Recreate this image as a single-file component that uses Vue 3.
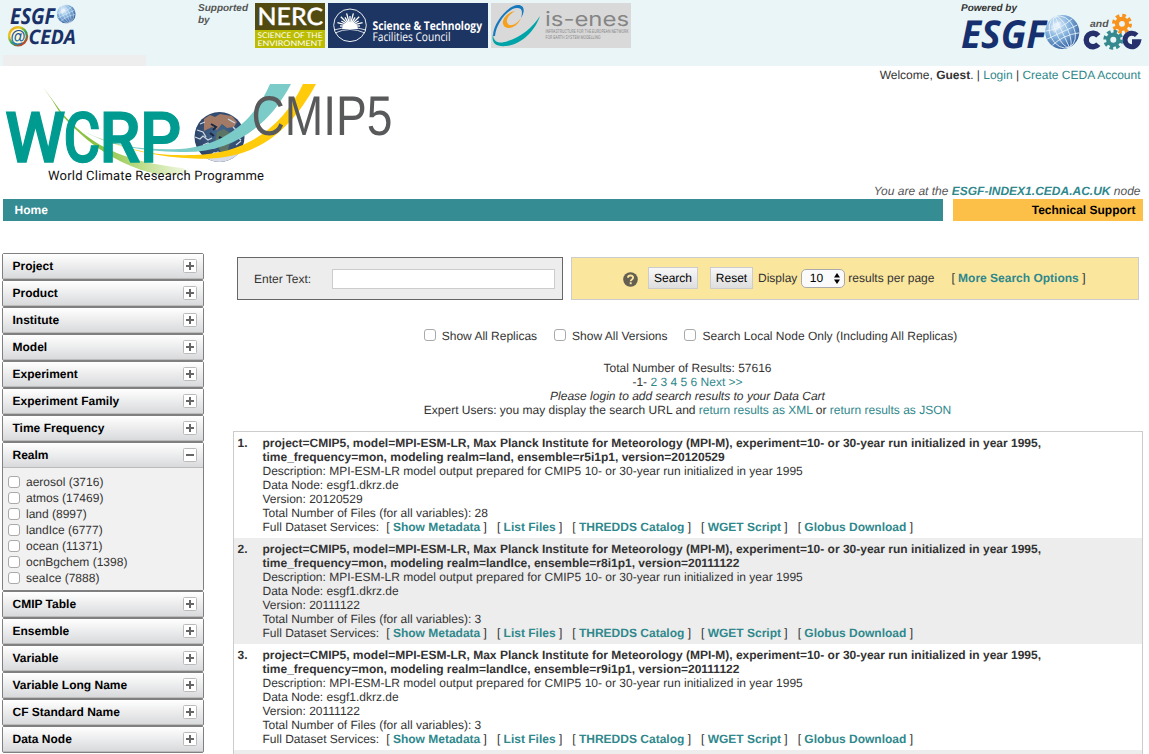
<script setup>
const before = ['Project', 'Product', 'Institute', 'Model', 'Experiment', 'Experiment Family', 'Time Frequency', 'Realm']
const after = ['CMIP Table', 'Ensemble', 'Variable', 'Variable Long Name', 'CF Standard Name', 'Data Node']
const realms = ['aerosol (3716)', 'atmos (17469)', 'land (8997)', 'landIce (6777)', 'ocean (11371)', 'ocnBgchem (1398)', 'seaIce (7888)']
const facets = [...before, ...after].map((name) => ({ name, open: name === 'Realm' }))
const services = ['Show Metadata', 'List Files', 'THREDDS Catalog', 'WGET Script', 'Globus Download']
const results = [
  { realm: 'land', ens: 'r5i1p1', version: '20120529', files: 28 },
  { realm: 'landIce', ens: 'r8i1p1', version: '20111122', files: 3 },
  { realm: 'landIce', ens: 'r9i1p1', version: '20111122', files: 3 },
]
const rays = Array.from({ length: 13 }, (_, i) => i * 15 - 90)
</script>

<template>
  <div class="page">
    <header class="top">
      <div class="left">
        <svg class="ceda" width="90" height="50" viewBox="0 0 90 50">
          <defs>
            <radialGradient id="globe" cx=".35" cy=".3" r=".8">
              <stop offset="0" stop-color="#e4f2fc" /><stop offset=".45" stop-color="#83b1dc" /><stop offset="1" stop-color="#285395" />
            </radialGradient>
            <linearGradient id="rainbow" x1="0" y1="0" x2=".8" y2="1">
              <stop offset="0" stop-color="#e8a01c" /><stop offset=".3" stop-color="#e8c61c" /><stop offset=".6" stop-color="#28a55b" /><stop offset="1" stop-color="#d43b26" />
            </linearGradient>
            <linearGradient id="blues" x1="0" y1="0" x2="0" y2="1">
              <stop offset="0" stop-color="#17358a" /><stop offset="1" stop-color="#1c7fc0" />
            </linearGradient>
            <symbol id="world" viewBox="0 0 36 36">
              <circle cx="18" cy="18" r="17.3" fill="url(#globe)" />
              <g fill="none" stroke="#e8f4fc" stroke-width=".8" transform="rotate(-25 18 18)">
                <ellipse cx="18" cy="18" rx="6" ry="17" /><ellipse cx="18" cy="18" rx="12.5" ry="17" />
                <path d="M18 1v34M1 18h34M3 10q15 5 30 0M3 26q15 -5 30 0" />
              </g>
              <path d="M6 13q5-6 11-5l-2 6-5 5z" fill="#fff" opacity=".35" />
            </symbol>
          </defs>
          <text class="os" x="10" y="24" font-size="22" textLength="45" lengthAdjust="spacingAndGlyphs" fill="#1a3167">ESGF</text>
          <use href="#world" x="56.500" y="4" width="19.500" height="20" />
          <circle cx="18" cy="36.300" r="9" fill="#fdf8d0" stroke="url(#rainbow)" stroke-width="2.400" />
          <text x="10.500" y="41.500" font-size="17" font-weight="bold" font-family="Liberation Sans, sans-serif" textLength="15" lengthAdjust="spacingAndGlyphs" fill="url(#blues)">@</text>
          <text class="os" x="28.500" y="43.500" font-size="20" textLength="47.500" lengthAdjust="spacingAndGlyphs" fill="#1a3167">CEDA</text>
        </svg>
        <div class="stub"></div>
      </div>
      <div class="supported">Supported by</div>
      <div class="logos">
        <svg width="70" height="45" viewBox="0 0 70 45">
          <path fill="#514a11" d="M0 0h70v27H0z" /><path fill="#bcbd00" d="M0 27h70v18H0z" />
          <g fill="#fff" font-family="Lato, sans-serif">
            <text x="2.500" y="22" font-size="24" font-weight="500" stroke="#fff" stroke-width=".35" textLength="65.500" lengthAdjust="spacingAndGlyphs">NERC</text>
            <text x="2.500" y="34.800" font-size="7.800" textLength="65" lengthAdjust="spacingAndGlyphs">SCIENCE OF THE</text>
            <text x="2.500" y="42.800" font-size="7.800" textLength="65" lengthAdjust="spacingAndGlyphs">ENVIRONMENT</text>
          </g>
        </svg>
        <svg width="160" height="45" viewBox="0 0 160 45">
          <path fill="#1d3562" d="M0 0h160v45H0z" />
          <circle cx="22" cy="22.300" r="16.300" fill="none" stroke="#fff" stroke-width=".9" />
          <g stroke="#fff" stroke-width="1.300">
            <path v-for="(a, i) in rays" :key="a" :d="i % 2 ? 'M22 20V10' : 'M22 20V13'" :transform="`rotate(${a} 22 23)`" />
          </g>
          <path d="M14 26a8 7 0 0 1 16 0z" fill="#fff" /><path d="M6 27q16-5 32 0M7 30q15-7 30 0" fill="none" stroke="#fff" stroke-width=".8" />
          <g fill="#fff" font-family="Open Sans, sans-serif">
            <text x="44.500" y="26.500" font-size="12" font-weight="bold" textLength="109.500" lengthAdjust="spacingAndGlyphs">Science &amp; Technology</text>
            <text x="44.500" y="38.300" font-size="12" textLength="78" lengthAdjust="spacingAndGlyphs">Facilities Council</text>
          </g>
        </svg>
        <svg width="140" height="45" viewBox="0 0 140 45">
          <path fill="#d9d9d9" d="M0 0h140v45H0z" />
          <path d="M2 33C2 20 17 2 27 2c7 0 7 7 3 13 2-7 1-10-4-10C17 5 5 21 4 33z" fill="#1679bd" />
          <path d="M30 15c-3 8-12 13-17 8-4-5 3-14 11-15-7 4-10 10-7 13 3 3 9 0 13-6z" fill="#f6a01b" />
          <path d="M2 31c0 9 7 10 15 7 13-4 25-14 32-25-5 15-19 29-34 30C4 44 0 39 2 31z" fill="#00a4a8" />
          <g fill="#858585" font-family="Inter, sans-serif">
            <text x="54" y="23" font-size="20" font-weight="400" textLength="84" lengthAdjust="spacingAndGlyphs">is-enes</text>
            <text x="54.500" y="30" font-size="5" textLength="83" lengthAdjust="spacingAndGlyphs">INFRASTRUCTURE FOR THE EUROPEAN NETWORK</text>
            <text x="54.500" y="36" font-size="5" textLength="55" lengthAdjust="spacingAndGlyphs">FOR EARTH SYSTEM MODELLING</text>
          </g>
        </svg>
      </div>
      <svg class="powered" width="189" height="60" viewBox="0 0 189 60">
        <text x="1" y="11" class="bi" fill="#333" textLength="56" lengthAdjust="spacingAndGlyphs">Powered by</text>
        <text class="os" x="1" y="48" font-size="38.500" textLength="85" lengthAdjust="spacingAndGlyphs" fill="#16306f">ESGF</text>
        <use href="#world" x="84.500" y="14" width="35.500" height="36" />
        <text x="130" y="27" class="bi" fill="#555" textLength="18.500" lengthAdjust="spacingAndGlyphs">and</text>
        <g fill="none">
          <g stroke="#f7931e"><circle cx="162" cy="23.800" r="5" stroke-width="4.200" /><circle cx="162" cy="23.800" r="8" stroke-width="4" stroke-dasharray="3.500 2.783" /></g>
          <path d="M138.300 35.700A6.800 6.800 0 1 0 138.300 44.300" stroke="#25306c" stroke-width="5.400" />
          <path d="M176.700 35.200A6.800 6.800 0 1 0 178.400 41.700H172" stroke="#25306c" stroke-width="5" />
          <g stroke="#35898f"><circle cx="153.300" cy="39.700" r="5.100" stroke-width="4.200" /><circle cx="153.300" cy="39.700" r="8" stroke-width="4" stroke-dasharray="3.500 2.783" /></g>
        </g>
      </svg>
    </header>

    <div class="welcome">Welcome, <b>Guest</b>. | <a>Login</a> | <a>Create CEDA Account</a></div>

    <div class="banner">
      <svg width="400" height="106" viewBox="0 83 400 106">
        <defs>
          <radialGradient id="earth" cx=".5" cy=".4" r=".6"><stop offset="0" stop-color="#476b91" /><stop offset="1" stop-color="#223356" /></radialGradient>
          <linearGradient id="fade" x1="0" x2="1"><stop offset="0" stop-color="#85bd3c" /><stop offset=".4" stop-color="#8cc344" /><stop offset=".65" stop-color="#b9da82" /><stop offset="1" stop-color="#f3f9e6" /></linearGradient>
          <clipPath id="ec"><circle cx="219.500" cy="137" r="25" /></clipPath>
        </defs>
        <path d="M43 87Q52 99 62 113C84 137 110 160 182 168Q192 171 186 173Q168 178 148 172C108 160 82 138 60 113Q52 99 43 87z" fill="url(#fade)" />
        <g clip-path="url(#ec)">
          <path fill="url(#earth)" d="M190 110h60v60h-60z" />
          <path d="M204 119l6-4 5 2 5-3 12 2 5 6-3 5-7 1-5-4-5 6-5-3-8 4z" fill="#a37a66" />
          <path d="M217 132l7-3 4 3 7 2-1 6-5 5-1 7-6 4-3-8-4-5z" fill="#5d7364" />
          <path d="M195 137l5 2 3-3 5 4 4-2M197 130l6 2 3 5M233 127l5 5-2 4 5 4M203 145l5-2 5 5 4-1M228 119l7 4M200 124l5-2M212 155l6-3 4 3M236 145l5-4" stroke="#ccd5e2" stroke-width="1.300" fill="none" />
          <path d="M203 155l6 1 5-4 6 2 7-2 5 3 9-3-6 12h-24z" fill="#d8dce8" />
          <path d="M211 124l5 3-3 3M219 137l4 2M207 149l4-3M231 138l4-3M210 133l4 3" stroke="#192642" stroke-width="2" fill="none" />
        </g>
        <path d="M85 132C117 148 149 150 180 149C227 146 256 117 270 84H291C269 126 232 154 180 152C142 151 111 146 85 132z" fill="#7bccc8" />
        <path d="M92 135C135 153 160 156 195 155C247 153 282 128 303 84H316C288 136 250 162 194 158.500C158 157 128 151 92 135z" fill="#ffcb0a" />
        <g font-family="Roboto, sans-serif" font-weight="500" font-size="70" fill="#009b90" stroke="#009b90" stroke-width="1.300">
          <text x="5" y="162" textLength="60.500" lengthAdjust="spacingAndGlyphs">W</text>
          <text x="63.500" y="162" textLength="37" lengthAdjust="spacingAndGlyphs">C</text>
          <text x="99.500" y="162" textLength="41" lengthAdjust="spacingAndGlyphs">R</text>
          <text x="140" y="162" textLength="41.500" lengthAdjust="spacingAndGlyphs">P</text>
        </g>
        <text x="251.500" y="135" font-family="Liberation Sans, sans-serif" font-size="56" fill="#58595b" textLength="141" lengthAdjust="spacingAndGlyphs">CMIP5</text>
        <text x="48" y="179.800" font-family="Roboto, sans-serif" font-size="13" fill="#111" textLength="216" lengthAdjust="spacing">World Climate Research Programme</text>
      </svg>
      <div class="node">You are at the <a><b>ESGF-INDEX1.CEDA.AC.UK</b></a> node</div>
    </div>

    <nav class="nav"><div class="home">Home</div><div class="tech">Technical Support</div></nav>

    <div class="body">
      <aside>
        <section v-for="f in facets" :key="f.name" class="facet">
          <div class="fh"><span>{{ f.name }}</span>
            <svg width="14" height="14" viewBox="0 0 14 14"><rect x=".5" y=".5" width="13" height="13" rx="1" fill="#fff" stroke="#bbb" /><path :d="f.open ? 'M3 7h8' : 'M3 7h8M7 3v8'" stroke="#666" stroke-width="2" /></svg>
          </div>
          <div v-if="f.open" class="panel"><label v-for="r in realms" :key="r"><i class="cb"></i>{{ r }}</label></div>
        </section>
      </aside>

      <main>
        <div class="search">
          <div class="enter"><span>Enter Text:</span><input type="text" /></div>
          <div class="opts">
            <svg class="help" width="15" height="15" viewBox="0 0 15 15"><circle cx="7.500" cy="7.500" r="7.300" fill="#645f50" /><path d="M5 5.800C5 2.700 10.100 2.700 10.100 5.700 10.100 7.500 7.700 7.400 7.700 9.200M7.700 10.200v2" fill="none" stroke="#fae69e" stroke-width="1.900" /></svg>
            <button class="b1">Search</button><button class="b2">Reset</button>
            <span>Display</span>
            <div class="sel"><span>10</span><svg width="6" height="11" viewBox="0 0 6 11"><path d="M3 0l3 4.500H0zM3 11l3-4.500H0z" /></svg></div>
            <span>results per page</span>
            <span class="more">[ <a><b>More Search Options</b></a> ]</span>
          </div>
        </div>
        <div class="checks">
          <label><i class="cb"></i>Show All Replicas</label>
          <label><i class="cb"></i>Show All Versions</label>
          <label><i class="cb"></i>Search Local Node Only (Including All Replicas)</label>
        </div>
        <div class="summary">
          <div>Total Number of Results: 57616</div>
          <div>-1- <a>2</a> <a>3</a> <a>4</a> <a>5</a> <a>6</a> <a>Next &gt;&gt;</a></div>
          <div><em>Please login to add search results to your Data Cart</em></div>
          <div>Expert Users: you may display the search URL and <a>return results as XML</a> or <a>return results as JSON</a></div>
        </div>
        <div class="results">
          <article v-for="(r, i) in results" :key="r.ens">
            <b class="num">{{ i + 1 }}.</b>
            <div>
              <b>project=CMIP5, model=MPI-ESM-LR, Max Planck Institute for Meteorology (MPI-M), experiment=10- or 30-year run initialized in year 1995,<br />time_frequency=mon, modeling realm={{ r.realm }}, ensemble={{ r.ens }}, version={{ r.version }}</b>
              <div>Description: MPI-ESM-LR model output prepared for CMIP5 10- or 30-year run initialized in year 1995</div>
              <div>Data Node: esgf1.dkrz.de</div>
              <div>Version: {{ r.version }}</div>
              <div>Total Number of Files (for all variables): {{ r.files }}</div>
              <div class="svc"><span class="lead">Full Dataset Services:</span><span v-for="s in services" :key="s">[ <a><b>{{ s }}</b></a> ]</span></div>
            </div>
          </article>
          <article></article>
        </div>
      </main>
    </div>
  </div>
</template>

<style>
html, body { margin: 0; background: #fff; overflow: hidden; }
</style>
<style scoped>
* { box-sizing: border-box; }
.page { width: 1149px; height: 754px; overflow: hidden; font: 12px/14px "Liberation Sans", Arial, sans-serif; color: #333; text-rendering: geometricPrecision; }
svg { display: block; flex: none; }
a { color: #2f888c; }
.top { height: 66px; background: #e9f5f7; display: flex; }
.left { width: 198px; }
.stub { width: 143px; height: 11px; margin: 5px 0 0 3px; background: #eee; }
.os { font-family: "Open Sans", sans-serif; font-weight: bold; font-style: italic; }
.bi { font: italic bold 10px "Liberation Sans", sans-serif; }
.supported { width: 57px; padding-top: 3px; font-size: 10px; font-weight: bold; font-style: italic; line-height: 12px; color: #555; }
.logos { display: flex; gap: 3px; padding-top: 3px; }
.powered { margin-left: auto; }
.welcome { height: 17px; padding: 2px 8.5px 0 0; text-align: right; }
.banner { height: 116px; display: flex; justify-content: space-between; }
.node { align-self: flex-end; padding: 0 8.5px 1px 0; font-style: italic; color: #555; }
.nav { display: flex; gap: 10px; padding: 0 6px 0 3px; height: 22px; line-height: 22px; font-weight: bold; }
.home { width: 940px; padding-left: 11.5px; background: #358c92; color: #fff; }
.tech { flex: 1; padding-right: 7.5px; text-align: right; background: #fcc048; color: #000; }
.body { display: flex; padding: 32px 6px 0 2px; }
aside { width: 202px; flex: none; }
.facet { border: 1px solid #808080; border-radius: 2px; }
.fh { height: 25px; display: flex; align-items: center; justify-content: space-between; padding: 0 6px 0 9.5px; font-weight: bold; color: #000; background: linear-gradient(#fff, #d9dadc); border-bottom: 1px solid #bbb; }
.panel { height: 122px; padding: 6px 0 0 5px; background: #f1f1f1; }
.panel label { display: flex; align-items: center; gap: 6px; height: 16px; }
.cb { width: 12px; height: 12px; flex: none; border: 1px solid #a9a9a9; border-radius: 3px; background: #fff; }
main { width: 910px; margin-left: 29px; }
.search { display: flex; gap: 8px; padding: 4px 4px 0; }
.enter { width: 326px; height: 43px; display: flex; align-items: center; padding: 0 7px 0 16px; border: 1px solid #666; background: #ededed; justify-content: space-between; }
.enter input { width: 223px; height: 20px; border: 1px solid #ccc; background: #fff; padding: 0; }
.opts { width: 568px; height: 43px; display: flex; align-items: center; padding: 0 0 2px 50px; border: 1px solid #ccc; background: #fbe69e; }
.help { margin: 3px 10px 0 1px; }
button { height: 22px; padding: 0; border: 1px solid #ccc; background: linear-gradient(#f8f8f8, #dedede); font: 12px "Liberation Sans", sans-serif; color: #000; text-rendering: geometricPrecision; }
.b1 { width: 50px; margin-right: 12px; }
.b2 { width: 43px; margin-right: 5px; }
.sel { width: 44px; height: 19px; margin: 1px 3.5px 0 3.5px; padding: 0 4px 0 8px; display: flex; align-items: center; justify-content: space-between; border: 1px solid #aaa; border-radius: 5px; background: #fafafa; color: #000; }
.more { margin-left: 17px; }
.checks { display: flex; justify-content: center; gap: 17px; margin-top: 29px; padding-left: 6px; }
.checks label { display: flex; gap: 6px; height: 14px; }
.checks label:first-child { margin-left: -1px; }
.summary { margin: 18px 1px 14px 0; text-align: center; }
.results { border: 1px solid #ccc; }
article { display: flex; padding: 4px 4px 4px 3.5px; height: 106px; white-space: nowrap; }
article:nth-child(even) { background: #ededed; }
.num { width: 25px; flex: none; }
.svc { display: flex; gap: 10px; }
.lead { margin-right: -3px; }
</style>
